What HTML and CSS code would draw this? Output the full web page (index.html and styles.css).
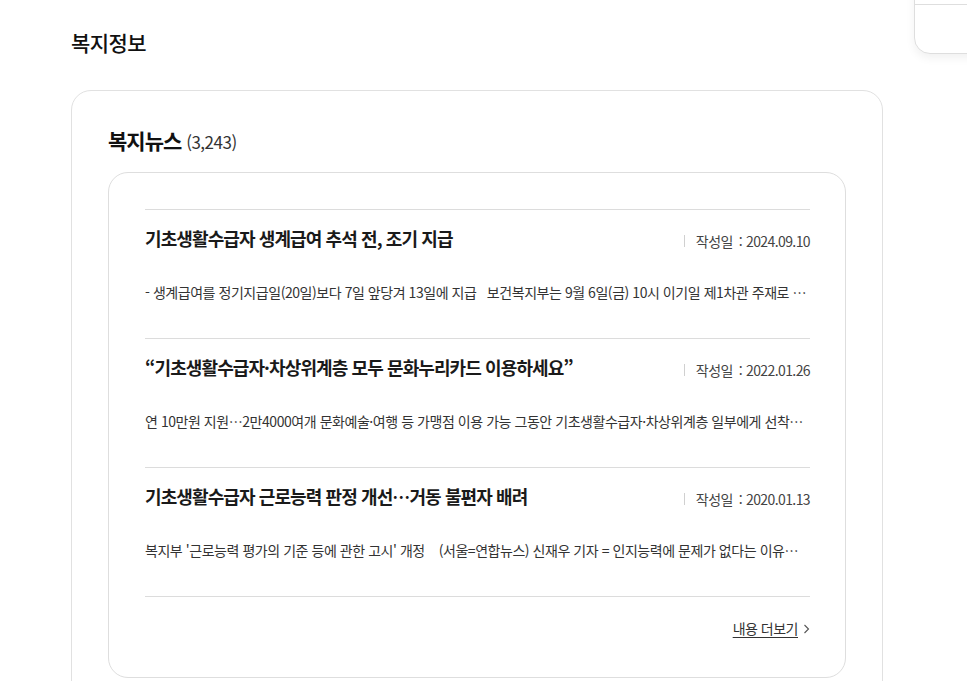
FILE: index.html
```html
<!DOCTYPE html>
<html lang="ko">
<head>
<meta charset="utf-8">
<title>복지정보</title>
<link rel="stylesheet" href="styles.css">
</head>
<body>
<div class="page">
  <h1 class="page-title">복지정보</h1>
  <section class="card">
    <h2 class="card-title">복지뉴스 <span class="count">(3,243)</span></h2>
    <div class="news-box">
      <ul class="news-list">
        <li class="news-item">
          <div class="news-head">
            <h3 class="news-title">기초생활수급자 생계급여 추석 전, 조기 지급</h3>
            <span class="news-date">작성일 <span class="colon">:</span> 2024.09.10</span>
          </div>
          <p class="news-desc">- 생계급여를 정기지급일(20일)보다 7일 앞당겨 13일에 지급 &nbsp; 보건복지부는 9월 6일(금) 10시 이기일 제1차관 주재로 추석 명절 대비 민생 안정 대책을 논의하였다</p>
        </li>
        <li class="news-item">
          <div class="news-head">
            <h3 class="news-title">“기초생활수급자·차상위계층 모두 문화누리카드 이용하세요”</h3>
            <span class="news-date">작성일 <span class="colon">:</span> 2022.01.26</span>
          </div>
          <p class="news-desc">연 10만원 지원…2만4000여개 문화예술·여행 등 가맹점 이용 가능 그동안 기초생활수급자·차상위계층 일부에게 선착순으로 지급되던 문화누리카드</p>
        </li>
        <li class="news-item">
          <div class="news-head">
            <h3 class="news-title">기초생활수급자 근로능력 판정 개선…거동 불편자 배려</h3>
            <span class="news-date">작성일 <span class="colon">:</span> 2020.01.13</span>
          </div>
          <p class="news-desc">복지부 '근로능력 평가의 기준 등에 관한 고시' 개정 &nbsp; &nbsp;(서울=연합뉴스) 신재우 기자 = 인지능력에 문제가 없다는 이유로 근로능력이 있다고 판정받던</p>
        </li>
      </ul>
      <div class="more-row">
        <a class="more-link" href="#">내용 더보기</a>
        <svg class="chev" width="7" height="10" viewBox="0 0 7 10"><path d="M1.5 1 L5.5 5 L1.5 9" fill="none" stroke="#555" stroke-width="1.1"/></svg>
      </div>
    </div>
  </section>
</div>
<div class="quick-menu"><div class="quick-line"></div></div>
</body>
</html>
```
FILE: styles.css
```css
* { box-sizing: border-box; }
html, body { margin: 0; padding: 0; background: #fff; }
body {
  font-family: "Noto Sans CJK KR", "Noto Sans", sans-serif;
  color: #222;
  overflow: hidden;
}
.page {
  width: 812px;
  margin-left: 71px;
  padding-top: 27px;
}
.page-title {
  margin: 0;
  font-size: 21px;
  line-height: 30px;
  font-weight: 500;
  color: #111;
  letter-spacing: -0.6px;
}
.card {
  margin-top: 33px;
  border: 1px solid #e1e1e1;
  border-radius: 20px;
  padding: 35px 36px 40px;
}
.card-title {
  margin: 0;
  font-size: 21px;
  line-height: 28px;
  font-weight: 700;
  color: #111;
  letter-spacing: -1px;
}
.count {
  font-size: 17px;
  font-weight: 400;
  color: #333;
  letter-spacing: -0.5px;
}
.news-box {
  margin-top: 16px;
  border: 1px solid #dedede;
  border-radius: 20px;
  padding: 36px 35px 39px 36px;
}
.news-list {
  list-style: none;
  margin: 0;
  padding: 0;
}
.news-item {
  border-top: 1px solid #dcdcdc;
  padding: 15px 0 36px;
}
.news-head {
  display: flex;
  align-items: flex-start;
  justify-content: space-between;
  height: 26px;
}
.news-title {
  margin: 0;
  font-size: 18px;
  line-height: 26px;
  font-weight: 700;
  color: #1a1a1a;
  letter-spacing: -0.9px;
}
.news-date {
  display: flex;
  align-items: center;
  font-size: 14px;
  line-height: 20px;
  color: #444;
  letter-spacing: -0.6px;
  padding-left: 12px;
  position: relative;
  margin-top: 6px;
}
.news-date::before {
  content: "";
  position: absolute;
  left: 0;
  top: 50%;
  width: 1px;
  height: 12px;
  margin-top: -6px;
  background: #d0d0d0;
}
.colon { margin: 0 4px 0 6px; }
.news-desc {
  margin: 31px 0 0;
  font-size: 14px;
  line-height: 20px;
  color: #333;
  letter-spacing: -0.45px;
  white-space: nowrap;
  overflow: hidden;
  text-overflow: ellipsis;
}
.more-row {
  border-top: 1px solid #dcdcdc;
  display: flex;
  justify-content: flex-end;
  align-items: center;
  gap: 5px;
  padding-top: 21px;
}
.more-link {
  font-size: 14px;
  line-height: 20px;
  color: #333;
  text-decoration: underline;
  text-underline-offset: 3px;
  letter-spacing: -0.5px;
}
.chev { display: block; margin-top: 1px; }
.quick-menu {
  position: fixed;
  top: -40px;
  left: 914px;
  width: 90px;
  height: 94px;
  border: 1px solid #dedede;
  border-radius: 16px;
  background: #fff;
  box-shadow: 0 4px 10px rgba(0,0,0,0.06);
}
.quick-line {
  margin-top: 43px;
  height: 1px;
  background: #dedede;
}
```
